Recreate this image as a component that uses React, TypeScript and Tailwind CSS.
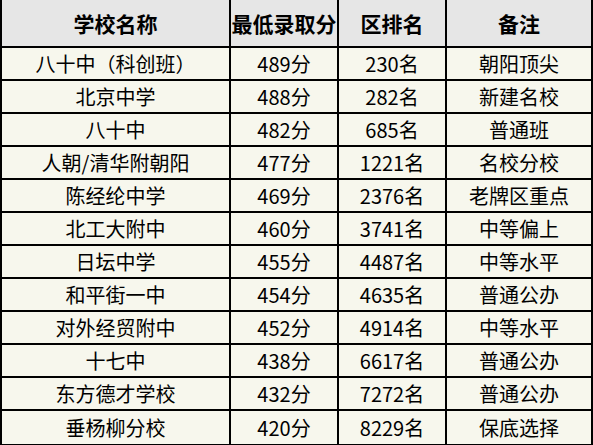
import React from "react";

const rows: [string, string, string, string][] = [
  ["八十中（科创班）", "489分", "230名", "朝阳顶尖"],
  ["北京中学", "488分", "282名", "新建名校"],
  ["八十中", "482分", "685名", "普通班"],
  ["人朝/清华附朝阳", "477分", "1221名", "名校分校"],
  ["陈经纶中学", "469分", "2376名", "老牌区重点"],
  ["北工大附中", "460分", "3741名", "中等偏上"],
  ["日坛中学", "455分", "4487名", "中等水平"],
  ["和平街一中", "454分", "4635名", "普通公办"],
  ["对外经贸附中", "452分", "4914名", "中等水平"],
  ["十七中", "438分", "6617名", "普通公办"],
  ["东方德才学校", "432分", "7272名", "普通公办"],
  ["垂杨柳分校", "420分", "8229名", "保底选择"],
];

const headers = ["学校名称", "最低录取分", "区排名", "备注"];

function Row({ cells, header, last }: { cells: string[]; header?: boolean; last?: boolean }) {
  return (
    <div
      className={
        "flex " +
        (header ? "h-[48px] bg-[#e6e6e6] font-bold text-[21px] " : "h-[33px] bg-[#f7f7ed] text-[20px] ") +
        (last ? "" : "border-b-2 border-black")
      }
    >
      <div className="w-[229px] shrink-0 border-r-2 border-black flex items-center justify-center">{cells[0]}</div>
      <div className="w-[108px] shrink-0 border-r-2 border-black flex items-center justify-center">{cells[1]}</div>
      <div className="w-[108px] shrink-0 border-r-2 border-black flex items-center justify-center">{cells[2]}</div>
      <div className="flex-1 flex items-center justify-center">{cells[3]}</div>
    </div>
  );
}

export default function App() {
  return (
    <div className="w-[593px] h-[445px] bg-white overflow-hidden">
      <div
        className="w-[593px] border-l-2 border-r-2 border-b-2 border-black text-black leading-none"
        style={{ fontFamily: '"Noto Sans CJK SC", "Noto Sans", sans-serif' }}
      >
        <Row cells={headers} header />
        {rows.map((r, i) => (
          <Row key={i} cells={r} last={i === rows.length - 1} />
        ))}
      </div>
    </div>
  );
}
